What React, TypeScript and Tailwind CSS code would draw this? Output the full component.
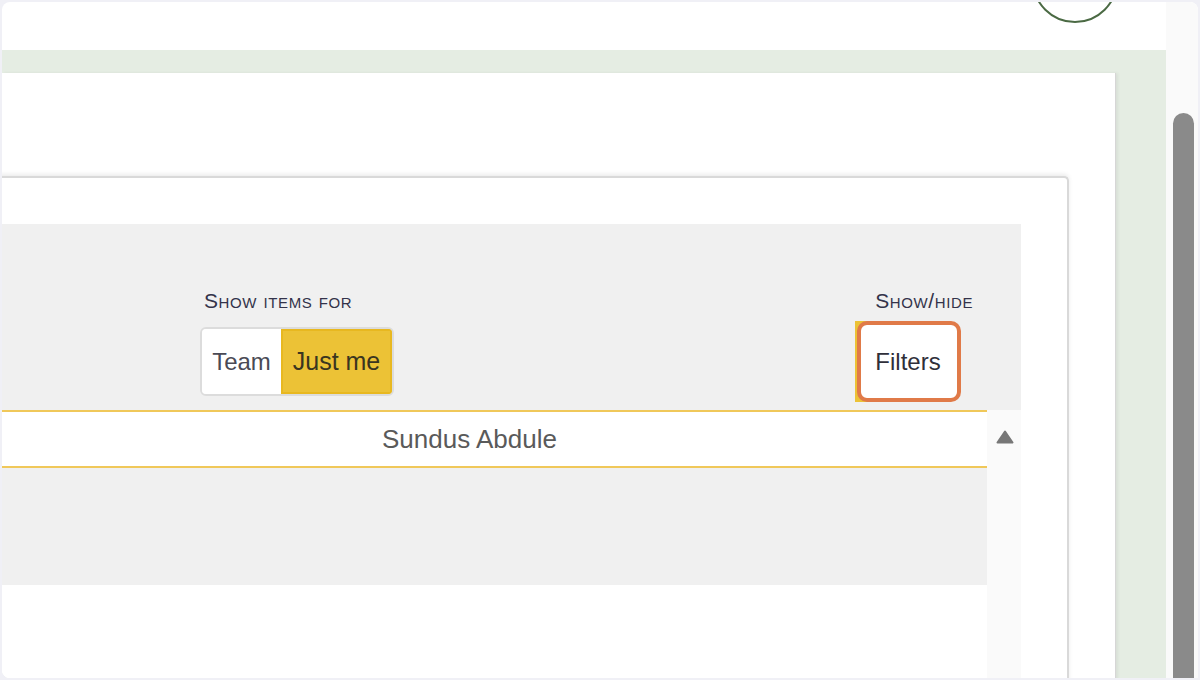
const font = { fontFamily: '"Liberation Sans", Arial, sans-serif' };

const SmallCapsLabel = ({ children }: { children: string }) => (
  <div className="text-[21px] leading-none text-[#33334a] [font-variant:small-caps] tracking-[0.6px]">
    {children}
  </div>
);

const Toggle = () => (
  <div className="flex h-[69px] overflow-hidden rounded-[6px] border-2 border-[#dcdcdc] text-[24px]">
    <div className="flex w-[79px] items-center justify-center bg-white text-[#4a4a55]">Team</div>
    <div className="flex w-[111px] items-center justify-center border-2 border-[#e8b820] bg-[#ecc236] text-[25px] text-[#3a3520]">
      Just me
    </div>
  </div>
);

const FiltersButton = () => (
  <div className="relative h-[81px] w-[106px]">
    <div className="absolute inset-y-0 left-0 w-[24px] bg-[#ecc236]" />
    <div className="absolute inset-y-0 left-[2px] right-0 flex items-center justify-center rounded-[10px] border-4 border-[#e07a48] bg-white pr-[2px] text-[24px] text-[#2f2f3a]">
      Filters
    </div>
  </div>
);

const UpArrow = () => (
  <svg width="18" height="14" viewBox="0 0 18 14">
    <path d="M9 1.5 L16.5 12.5 L1.5 12.5 Z" fill="#777" stroke="#777" strokeWidth="2" strokeLinejoin="round" />
  </svg>
);

export default function App() {
  return (
    <div className="h-[680px] w-[1200px] overflow-hidden bg-[#f0f0f6] p-[2px]" style={font}>
      <div className="flex h-full overflow-hidden rounded-l-lg rounded-tr-lg bg-white">
        <div className="relative flex min-w-0 flex-1 flex-col">
          {/* avatar circle peeking from top */}
          <div className="absolute left-[1030px] top-[-65px] h-[86px] w-[86px] rounded-full border-2 border-[#4b6a44]" />
          <div className="h-[48px] shrink-0" />
          <div className="flex flex-1 flex-col bg-[#e5ede3] pr-[50px] pt-[23px]">
            <div className="flex flex-1 flex-col border-r border-[#d6d6d6] bg-white pt-[103px] shadow-[2px_0_3px_rgba(0,0,0,0.06)]">
              <div className="ml-[-10px] mr-[46px] flex flex-1 flex-col rounded-tr-[5px] border-r-2 border-t-2 border-[#d9d9d9] bg-white pl-[8px] shadow-[0_-2px_4px_rgba(0,0,0,0.08)]">
                <div className="h-[46px] shrink-0" />
                <div className="mr-[46px] flex flex-col">
                  <div className="flex h-[186px] items-start bg-[#f0f0f0] pl-[200px] pt-[66px]">
                    <div className="flex flex-col gap-[16px] pl-[4px]">
                      <SmallCapsLabel>Show items for</SmallCapsLabel>
                      <div className="ml-[-4px]">
                        <Toggle />
                      </div>
                    </div>
                    <div className="ml-auto mr-[60px] flex flex-col items-end gap-[10px]">
                      <div className="mr-[-12px] tracking-[1px]">
                        <SmallCapsLabel>Show/hide</SmallCapsLabel>
                      </div>
                      <FiltersButton />
                    </div>
                  </div>
                  <div className="flex">
                    <div className="flex flex-1 flex-col">
                      <div className="flex h-[58px] items-center justify-center border-y-2 border-[#f0c85a] bg-white pr-[48px] text-[26px] text-[#5a5a5a]">
                        Sundus Abdule
                      </div>
                      <div className="h-[117px] bg-[#f0f0f0]" />
                      <div className="h-[100px] bg-white" />
                    </div>
                    <div className="flex w-[34px] flex-col items-center bg-[#fafafa] pl-[2px] pt-[20px]">
                      <UpArrow />
                    </div>
                  </div>
                </div>
              </div>
            </div>
          </div>
        </div>
        <div className="flex w-[32px] shrink-0 flex-col bg-[#fafafa] pt-[111px]">
          <div className="ml-[7px] w-[21px] flex-1 rounded-t-full bg-[#8a8a8a]" />
        </div>
      </div>
    </div>
  );
}
